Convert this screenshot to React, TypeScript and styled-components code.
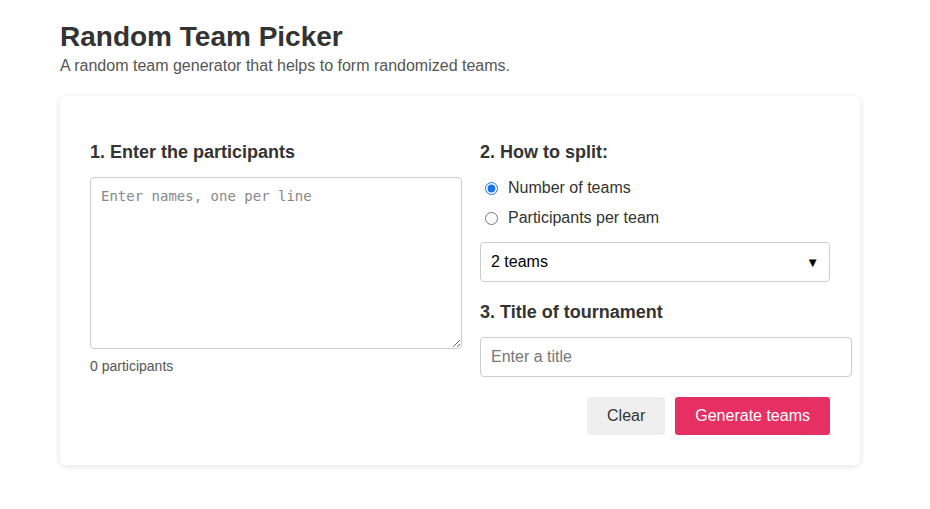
import React from "react";
import styled, { createGlobalStyle } from "styled-components";

const Global = createGlobalStyle`
  body {
    margin: 0;
    background: #ffffff;
    font-family: "Liberation Sans", Arial, sans-serif;
    color: #333;
  }
`;

const Page = styled.div`
  padding: 20px 60px;
  width: 800px;
`;

const Title = styled.h1`
  margin: 0;
  font-size: 28px;
  font-weight: 700;
  color: #333;
  line-height: 34px;
`;

const Subtitle = styled.p`
  margin: 2px 0 0;
  font-size: 16px;
  color: #555;
  line-height: 20px;
`;

const Card = styled.div`
  margin-top: 20px;
  background: #fff;
  border-radius: 6px;
  box-shadow: 0 1px 6px rgba(0, 0, 0, 0.12);
  padding: 30px;
  display: grid;
  grid-template-columns: 350px 350px;
  column-gap: 40px;
`;

const Column = styled.div`
  display: flex;
  flex-direction: column;
`;

const Heading = styled.h3<{ $top?: number; $bottom?: number }>`
  margin: ${(p) => p.$top ?? 16}px 0 ${(p) => p.$bottom ?? 15}px;
  font-size: 18px;
  font-weight: 700;
  color: #333;
  line-height: 20px;
`;

const TextArea = styled.textarea`
  width: 350px;
  height: 150px;
  padding: 10px;
  border: 1px solid #ccc;
  border-radius: 4px;
  font-family: "DejaVu Sans Mono", monospace;
  font-size: 14px;
  color: #333;
  resize: vertical;
  margin: 0;
  &::placeholder { color: #888; }
`;

const Count = styled.div`
  margin-top: 9px;
  font-size: 14px;
  color: #555;
`;

const RadioRow = styled.label`
  display: flex;
  align-items: center;
  gap: 10px;
  font-size: 16px;
  color: #333;
  height: 30px;
  input { margin: 0 0 0 5px; width: 13px; height: 13px; accent-color: #1a73e8; }
`;

const Select = styled.div`
  margin-top: 9px;
  height: 40px;
  box-sizing: border-box;
  border: 1px solid #ccc;
  border-radius: 4px;
  display: flex;
  align-items: center;
  justify-content: space-between;
  padding: 0 10px;
  font-size: 16px;
  color: #000;
`;

const Arrow = styled.span`
  font-size: 13px;
  color: #000;
`;

const Input = styled.input`
  width: 350px;
  padding: 10px;
  height: 18px;
  border: 1px solid #ccc;
  border-radius: 4px;
  font-family: "Liberation Sans", Arial, sans-serif;
  font-size: 16px;
  margin: 0;
  &::placeholder { color: #777; }
`;

const Buttons = styled.div`
  margin-top: 20px;
  display: flex;
  justify-content: flex-end;
  gap: 10px;
`;

const Button = styled.button<{ $primary?: boolean }>`
  height: 38px;
  border: none;
  border-radius: 3px;
  padding: 0 20px;
  font-family: "Liberation Sans", Arial, sans-serif;
  font-size: 16px;
  cursor: pointer;
  background: ${(p) => (p.$primary ? "#e63064" : "#efefef")};
  color: ${(p) => (p.$primary ? "#fff" : "#333")};
`;

export default function App() {
  return (
    <>
      <Global />
      <Page>
        <Title>Random Team Picker</Title>
        <Subtitle>A random team generator that helps to form randomized teams.</Subtitle>
        <Card>
          <Column>
            <Heading>1. Enter the participants</Heading>
            <TextArea placeholder="Enter names, one per line" />
            <Count>0 participants</Count>
          </Column>
          <Column>
            <Heading $bottom={11}>2. How to split:</Heading>
            <RadioRow>
              <input type="radio" name="split" defaultChecked />
              Number of teams
            </RadioRow>
            <RadioRow>
              <input type="radio" name="split" />
              Participants per team
            </RadioRow>
            <Select>
              2 teams
              <Arrow>▼</Arrow>
            </Select>
            <Heading $top={20}>3. Title of tournament</Heading>
            <Input placeholder="Enter a title" />
            <Buttons>
              <Button>Clear</Button>
              <Button $primary>Generate teams</Button>
            </Buttons>
          </Column>
        </Card>
      </Page>
    </>
  );
}
